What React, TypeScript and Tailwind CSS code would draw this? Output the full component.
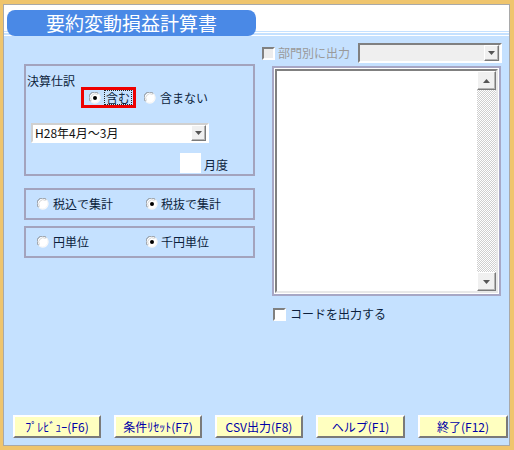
import React from "react";

const FONT = { fontFamily: '"Noto Sans CJK JP", "Noto Sans", sans-serif' };

function Radio({ checked }: { checked?: boolean }) {
  return (
    <svg width="12" height="12" viewBox="0 0 12 12" className="shrink-0">
      <circle cx="6" cy="6" r="5.5" fill="#ffffff" />
      <path d="M1.6 9.4 A5.5 5.5 0 0 1 9.4 1.6" fill="none" stroke="#8a8a8a" strokeWidth="1" />
      <path d="M2.5 8.6 A4.4 4.4 0 0 1 8.6 2.5" fill="none" stroke="#d8d8d8" strokeWidth="1" />
      <path d="M9.4 1.6 A5.5 5.5 0 0 1 1.6 9.4" fill="none" stroke="#f4f4f4" strokeWidth="1" />
      {checked && <circle cx="6" cy="6" r="2" fill="#000000" />}
    </svg>
  );
}

function Check({ disabled }: { disabled?: boolean }) {
  return (
    <span
      className={`block h-[13px] w-[13px] shrink-0 border-2 border-t-[#808080] border-l-[#808080] border-r-white border-b-white ${
        disabled ? "bg-[#ececec]" : "bg-white"
      }`}
    />
  );
}

function Arrow({ up }: { up?: boolean }) {
  return (
    <svg width="7" height="4" viewBox="0 0 7 4">
      <path d={up ? "M0 4 L3.5 0 L7 4 Z" : "M0 0 L7 0 L3.5 4 Z"} fill="#555555" />
    </svg>
  );
}

function ArrowBtn({ up, className = "" }: { up?: boolean; className?: string }) {
  return (
    <div
      className={`flex items-center justify-center bg-[#f0f0f0] border border-t-white border-l-white border-r-[#7a7a7a] border-b-[#7a7a7a] shadow-[inset_-1px_-1px_0_#b4b4b4] ${className}`}
    >
      <Arrow up={up} />
    </div>
  );
}

const BUTTONS = [
  { t: "ﾌﾟﾚﾋﾞｭｰ(F6)", w: "w-[88px]" },
  { t: "条件ﾘｾｯﾄ(F7)", w: "w-[88px]" },
  { t: "CSV出力(F8)", w: "w-[88px]" },
  { t: "ヘルプ(F1)", w: "w-[89px]" },
  { t: "終了(F12)", w: "w-[90px]" },
];

export default function App() {
  return (
    <div className="h-[450px] w-[514px] bg-[#efc56e] pb-[4px] pl-[3px] pr-[4px] pt-[4px]" style={FONT}>
      <div className="flex h-full flex-col border border-[#a9a9a9] bg-[#c5e1ff] text-[12px] leading-[14px] text-[#0c1e3c]">
        {/* Title band */}
        <div className="h-[32px] shrink-0 bg-[linear-gradient(to_bottom,#ffffff_26px,#c5e1ff_26px,#c5e1ff_27px,#ffffff_27px,#ffffff_28px,#c5e1ff_28px,#c5e1ff_30px,#ffffff_30px,#ffffff_31px,#c5e1ff_31px)] pl-[3px] pt-[5px]">
          <div className="flex h-[26px] w-[249px] items-center justify-center rounded-[8px] bg-[#4a89e6] text-[19px] leading-[20px] text-white">
            要約変動損益計算書
          </div>
        </div>

        {/* Body */}
        <div className="flex flex-1 pl-[20px]">
          {/* Left column */}
          <div className="mt-[27px] flex w-[231px] flex-col">
            <div className="h-[112px] border-2 border-[#a3a3bd] pl-[1px] pt-[8px]">
              <div className="leading-[13px]">決算仕訳</div>
              <div className="flex items-center">
                <div className="ml-[54px] flex h-[21px] w-[55px] items-center border-[3px] border-[#ee0000] pl-[5px]">
                  <Radio checked />
                  <span className="ml-[3px] border border-dotted border-[#222] px-[1px] leading-[13px]">含む</span>
                </div>
                <div className="ml-[8px] flex items-center">
                  <Radio />
                  <span className="ml-[4px]">含まない</span>
                </div>
              </div>
              <div className="ml-[4px] mt-[15px] flex h-[20px] w-[178px] items-center border-2 border-t-[#d0d0d0] border-l-[#d0d0d0] border-r-white border-b-white bg-white">
                <span className="flex-1 pl-[2px] text-[#111]">H28年4月～3月</span>
                <ArrowBtn className="mr-[1px] h-[16px] w-[15px]" />
              </div>
              <div className="mt-[10px] flex items-end">
                <div className="ml-[153px] h-[20px] w-[21px] bg-white" />
                <span className="ml-[3px] pb-[1px]">月度</span>
              </div>
            </div>

            <div className="mt-[12px] flex h-[32px] items-center border-2 border-[#a3a3bd] pl-[11px]">
              <div className="flex w-[109px] items-center">
                <Radio />
                <span className="ml-[4px]">税込で集計</span>
              </div>
              <div className="flex items-center">
                <Radio checked />
                <span className="ml-[3px]">税抜で集計</span>
              </div>
            </div>

            <div className="mt-[6px] flex h-[32px] items-center border-2 border-[#a3a3bd] pl-[11px]">
              <div className="flex w-[109px] items-center">
                <Radio />
                <span className="ml-[4px]">円単位</span>
              </div>
              <div className="flex items-center">
                <Radio checked />
                <span className="ml-[3px]">千円単位</span>
              </div>
            </div>
          </div>

          {/* Right column */}
          <div className="ml-[7px] mt-[6px] flex flex-col">
            <div className="flex items-center">
              <Check disabled />
              <span className="ml-[3px] w-[80px] text-[#9a9a9a]">部門別に出力</span>
              <div className="flex h-[20px] w-[144px] items-center justify-end border-2 border-t-[#808080] border-l-[#808080] border-r-white border-b-white bg-[#efefef]">
                <ArrowBtn className="mr-[1px] h-[16px] w-[15px]" />
              </div>
            </div>

            <div className="ml-[10px] mt-[3px] h-[230px] w-[229px] border-2 border-[#a7a7c5] bg-white p-[1px]">
              <div className="flex h-full border-2 border-t-[#808080] border-l-[#808080] border-r-[#e8e8e8] border-b-[#e8e8e8] bg-white">
                <div className="flex-1" />
                <div className="flex w-[19px] flex-col bg-[repeating-conic-gradient(#cfcfcf_0_25%,#ffffff_0_50%)] bg-[length:2px_2px]">
                  <ArrowBtn up className="h-[19px] w-[19px]" />
                  <div className="flex-1" />
                  <ArrowBtn className="h-[19px] w-[19px]" />
                </div>
              </div>
            </div>

            <div className="ml-[11px] mt-[11px] flex items-center">
              <Check />
              <span className="ml-[4px]">コードを出力する</span>
            </div>
          </div>
        </div>

        {/* Buttons */}
        <div className="mb-[7px] flex shrink-0 gap-[13px] pl-[9px]">
          {BUTTONS.map((b) => (
            <div
              key={b.t}
              className={`flex h-[23px] items-center justify-center border-2 border-t-white border-l-white border-r-[#7a7a7a] border-b-[#7a7a7a] bg-[#ffffc0] text-[#0000a8] ${b.w}`}
            >
              {b.t}
            </div>
          ))}
        </div>
      </div>
    </div>
  );
}
